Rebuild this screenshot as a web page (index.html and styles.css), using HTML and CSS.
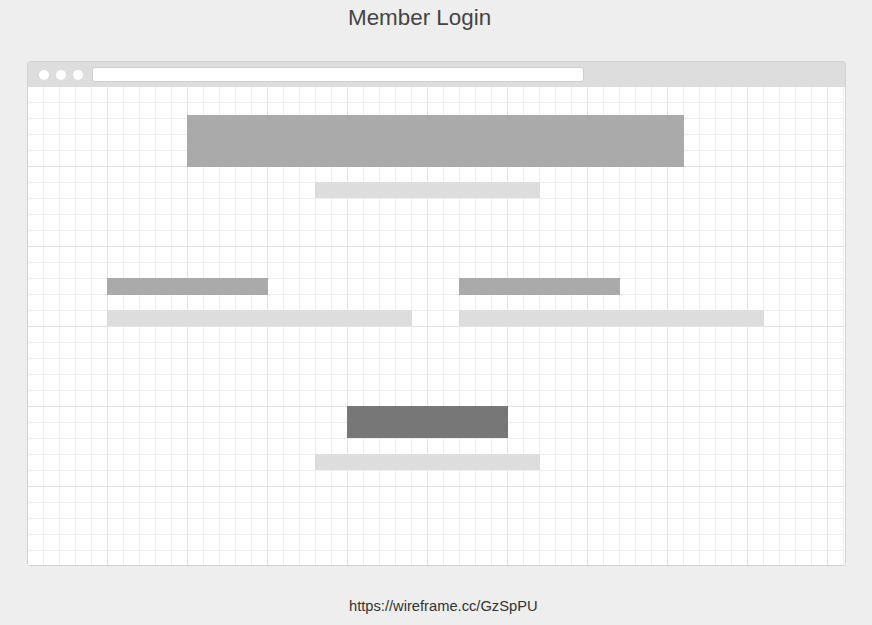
FILE: index.html
```html
<!DOCTYPE html>
<html>
<head>
<meta charset="utf-8">
<title>Member Login</title>
<link rel="stylesheet" href="styles.css">
</head>
<body>
<h1 class="page-title">Member Login</h1>
<div class="browser">
  <div class="browser-bar">
    <span class="dot"></span>
    <span class="dot"></span>
    <span class="dot"></span>
    <span class="address"></span>
  </div>
  <div class="canvas">
    <div class="blk heading"></div>
    <div class="blk subheading"></div>
    <div class="fields">
      <div class="field">
        <div class="blk label"></div>
        <div class="blk input"></div>
      </div>
      <div class="field">
        <div class="blk label"></div>
        <div class="blk input"></div>
      </div>
    </div>
    <div class="blk button"></div>
    <div class="blk link"></div>
  </div>
</div>
<p class="footer">https://wireframe.cc/GzSpPU</p>
</body>
</html>
```
FILE: styles.css
```css
html, body {
  margin: 0;
  padding: 0;
  background: #eeeeee;
}
body {
  width: 872px;
  height: 625px;
  overflow: hidden;
  font-family: "Liberation Sans", Arial, sans-serif;
}
.page-title {
  margin: 0;
  padding: 5px 0 0 348px;
  font-size: 22.4px;
  line-height: 26px;
  font-weight: normal;
  color: #444;
}
.browser {
  margin: 30px 0 0 27px;
  width: 819px;
  height: 505px;
  box-sizing: border-box;
  border: 1px solid #d2d2d2;
  border-radius: 3px;
  background: #fff;
  overflow: hidden;
}
.browser-bar {
  height: 25px;
  background: #dddddd;
  display: flex;
  align-items: center;
  padding-left: 11px;
  gap: 7px;
}
.dot {
  width: 10px;
  height: 10px;
  border-radius: 50%;
  background: #fff;
}
.address {
  margin-left: 2px;
  width: 492px;
  height: 15px;
  box-sizing: border-box;
  border: 1px solid #cfcfcf;
  border-radius: 3px;
  background: #fff;
}
.canvas {
  height: 478px;
  background-color: #fff;
  background-image:
    linear-gradient(to right, transparent 79px, #e4e4e4 79px),
    linear-gradient(to bottom, transparent 79px, #e4e4e4 79px),
    linear-gradient(to right, transparent 15px, #f0f0f0 15px),
    linear-gradient(to bottom, transparent 15px, #f0f0f0 15px);
  background-size: 80px 80px, 80px 80px, 16px 16px, 16px 16px;
  overflow: hidden;
}
.blk {
  display: block;
}
.heading {
  margin: 28px 0 0 159px;
  width: 497px;
  height: 52px;
  background: #aaaaaa;
}
.subheading {
  margin: 15px 0 0 287px;
  width: 225px;
  height: 16px;
  background: #dddddd;
}
.fields {
  display: flex;
  gap: 47px;
  margin-top: 80px;
  padding-left: 79px;
}
.field {
  width: 305px;
  display: flex;
  flex-direction: column;
  gap: 15px;
}
.label {
  width: 161px;
  height: 17px;
  background: #aaaaaa;
}
.input {
  width: 305px;
  height: 16px;
  background: #dddddd;
}
.button {
  margin: 80px 0 0 319px;
  width: 161px;
  height: 32px;
  background: #777777;
}
.link {
  margin: 16px 0 0 287px;
  width: 225px;
  height: 16px;
  background: #dddddd;
}
.footer {
  margin: 31px 0 0 0;
  padding-left: 349px;
  font-size: 14.7px;
  line-height: 18px;
  color: #333;
}
```
